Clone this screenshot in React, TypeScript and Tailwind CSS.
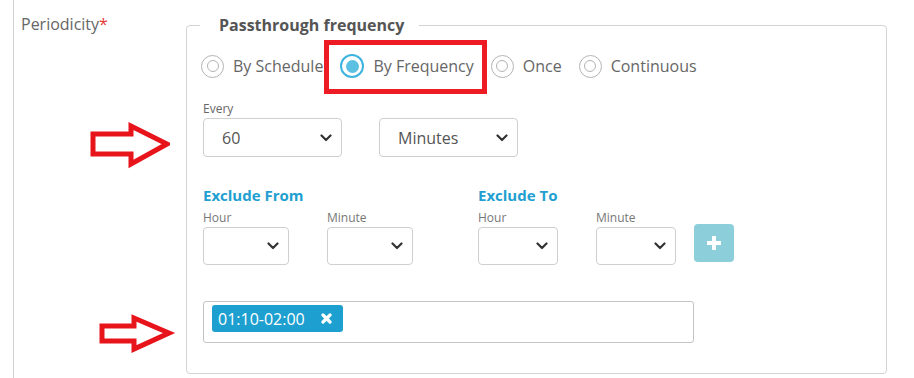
import React from "react";

const Chevron = () => (
  <svg width="12" height="8" viewBox="0 0 12 8" className="shrink-0">
    <path d="M1.5 1.5 L6 6 L10.5 1.5" fill="none" stroke="#333" strokeWidth="2.2" strokeLinecap="round" strokeLinejoin="round" />
  </svg>
);

const Select = ({ w, h, value }: { w: string; h: string; value?: string }) => (
  <div className={`${w} ${h} border border-[#cfcfcf] rounded-[4px] bg-white flex items-center justify-between pl-[18px] pr-[9px]`}>
    <span className="text-[16px] text-[#555]">{value ?? ""}</span>
    <Chevron />
  </div>
);

const Radio = ({ label, checked }: { label: string; checked?: boolean }) => (
  <div className="flex items-center">
    {checked ? (
      <div className="w-[24px] h-[24px] rounded-full border-2 border-[#3db3df] flex items-center justify-center">
        <div className="w-[13px] h-[13px] rounded-full bg-[#5bc0e2]" />
      </div>
    ) : (
      <div className="w-[23px] h-[23px] rounded-full border-[1.5px] border-[#b3b3b3] flex items-center justify-center">
        <div className="w-[12px] h-[12px] rounded-full border-[1.5px] border-[#b3b3b3]" />
      </div>
    )}
    <span className="ml-[9px] text-[16px] text-[#666]">{label}</span>
  </div>
);

const Arrow = ({ className, points }: { className: string; points: string }) => (
  <svg className={className} width="90" height="54" viewBox="0 0 90 54">
    <polygon points={points} fill="white" stroke="#e8141c" strokeWidth="5" strokeLinejoin="miter" />
  </svg>
);

export default function App() {
  return (
    <div className="relative w-[914px] h-[378px] bg-white overflow-hidden font-['Open_Sans',sans-serif]">
      <div className="flex h-full">
        <div className="ml-[13px] border-l border-[#d0d0d0] h-full flex">
          <div className="w-[172px] pl-[7px] pt-[12px]">
            <span className="text-[16px] leading-[22px] text-[#666]">
              Periodicity<span className="text-[#e53935]">*</span>
            </span>
          </div>
          <fieldset className="mt-[15px] w-[701px] h-[359px] border border-[#d3d3d3] rounded-[4px] pl-[16px]">
            <legend className="ml-[-3px] pl-[19px] pr-[15px] text-[16px] leading-[20px] font-bold text-[#555]">
              Passthrough frequency
            </legend>
            <div className="ml-[-2px] mt-[19px] flex items-center gap-[17px]">
              <Radio label="By Schedule" />
              <Radio label="By Frequency" checked />
              <Radio label="Once" />
              <Radio label="Continuous" />
            </div>

            <div className="mt-[23px] flex items-end gap-[37px]">
              <div className="flex flex-col">
                <span className="text-[12px] leading-[16px] text-[#666]">Every</span>
                <div className="mt-[1px]">
                  <Select w="w-[139px]" h="h-[39px]" value="60" />
                </div>
              </div>
              <Select w="w-[139px]" h="h-[39px]" value="Minutes" />
            </div>

            <div className="mt-[28px] flex">
              <div className="w-[275px] flex flex-col">
                <span className="text-[15px] leading-[20px] font-bold text-[#229fd0]">Exclude From</span>
                <div className="mt-[5px] flex gap-[38px]">
                  <div className="flex flex-col">
                    <span className="text-[12px] leading-[16px] text-[#777]">Hour</span>
                    <div className="mt-[1px]"><Select w="w-[86px]" h="h-[38px]" /></div>
                  </div>
                  <div className="flex flex-col">
                    <span className="text-[12px] leading-[16px] text-[#777]">Minute</span>
                    <div className="mt-[1px]"><Select w="w-[86px]" h="h-[38px]" /></div>
                  </div>
                </div>
              </div>
              <div className="flex flex-col">
                <span className="text-[15px] leading-[20px] font-bold text-[#229fd0]">Exclude To</span>
                <div className="mt-[5px] flex items-end">
                  <div className="flex flex-col">
                    <span className="text-[12px] leading-[16px] text-[#777]">Hour</span>
                    <div className="mt-[1px]"><Select w="w-[80px]" h="h-[38px]" /></div>
                  </div>
                  <div className="ml-[38px] flex flex-col">
                    <span className="text-[12px] leading-[16px] text-[#777]">Minute</span>
                    <div className="mt-[1px]"><Select w="w-[80px]" h="h-[38px]" /></div>
                  </div>
                  <div className="ml-[18px] mb-[3px] w-[40px] h-[38px] rounded-[4px] bg-[#8ccfdb] flex items-center justify-center">
                    <svg width="16" height="16" viewBox="0 0 16 16">
                      <path d="M8 1 V15 M1 8 H15" stroke="white" strokeWidth="4" />
                    </svg>
                  </div>
                </div>
              </div>
            </div>

            <div className="mt-[36px] w-[491px] h-[42px] border border-[#c4c4c4] rounded-[3px] pl-[8px] pt-[3px]">
              <div className="inline-flex items-center h-[27px] rounded-[3px] bg-[#1d9fd0] pl-[6px] pr-[11px]">
                <span className="text-[16px] text-white leading-[20px]">01:10-02:00</span>
                <svg className="ml-[16px]" width="11" height="11" viewBox="0 0 11 11">
                  <path d="M2 2 L9 9 M9 2 L2 9" stroke="white" strokeWidth="3.2" strokeLinecap="round" />
                </svg>
              </div>
            </div>
          </fieldset>
        </div>
      </div>

      <div className="absolute left-[324px] top-[40px] w-[163px] h-[54px] border-[5px] border-[#ed1c24]" />
      <Arrow className="absolute left-[80px] top-[118px]" points="13,16 51,16 51,8 87,26 51,46 51,36 13,36" />
      <Arrow className="absolute left-[89px] top-[310px]" points="13,16 45,16 45,8 80,23 45,39 45,31 13,31" />
    </div>
  );
}
